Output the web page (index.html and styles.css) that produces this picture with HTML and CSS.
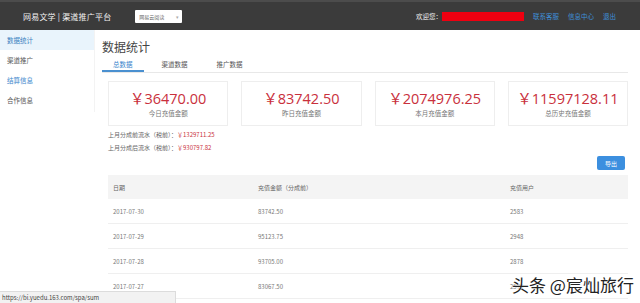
FILE: index.html
```html
<!DOCTYPE html>
<html lang="zh-CN">
  <head>
    <meta charset="UTF-8" />
    <meta name="viewport" content="width=device-width, initial-scale=1.0" />
    <title>网易文学 | 渠道推广平台</title>
    <link rel="stylesheet" href="styles.css">
  </head>
  <body>
    <!-- Top navigation bar -->
    <header class="topbar">
      <div class="brand">网易文学 | 渠道推广平台</div>
      <div class="select">网易云阅读<span class="caret">▾</span></div>
      <div class="user">
        <span class="welcome">欢迎您：</span>
        <span class="redact"></span>
        <a class="link" href="#">联系客服</a>
        <a class="link" href="#">信息中心</a>
        <a class="link" href="#">退出</a>
      </div>
    </header>

    <div class="layout">
      <!-- Side menu -->
      <nav class="sidebar">
        <div class="menu-item active">数据统计</div>
        <div class="menu-item">渠道推广</div>
        <div class="menu-item blue">结算信息</div>
        <div class="menu-item">合作信息</div>
      </nav>

      <main class="main">
        <h1 class="title">数据统计</h1>
        <div class="tabs">
          <div class="tab current">总数据</div>
          <div class="tab">渠道数据</div>
          <div class="tab">推广数据</div>
        </div>

        <div class="panel">
          <div class="cards">
            <div class="card">
              <div class="amount">￥36470.00</div>
              <div class="label">今日充值金额</div>
            </div>
            <div class="card">
              <div class="amount">￥83742.50</div>
              <div class="label">昨日充值金额</div>
            </div>
            <div class="card">
              <div class="amount">￥2074976.25</div>
              <div class="label">本月充值金额</div>
            </div>
            <div class="card">
              <div class="amount">￥11597128.11</div>
              <div class="label">总历史充值金额</div>
            </div>
          </div>

          <p class="note">上月分成前流水（税前）：<span class="red">￥1329711.25</span></p>
          <p class="note">上月分成后流水（税前）：<span class="red">￥930797.82</span></p>

          <div class="toolbar">
            <button type="button" class="export">导出</button>
          </div>

          <table class="table">
            <thead>
              <tr>
                <th class="col-date">日期</th>
                <th class="col-sum">充值金额（分成前）</th>
                <th>充值用户</th>
              </tr>
            </thead>
            <tbody>
              <tr><td>2017-07-30</td><td>83742.50</td><td>2583</td></tr>
              <tr><td>2017-07-29</td><td>95123.75</td><td>2948</td></tr>
              <tr><td>2017-07-28</td><td>93705.00</td><td>2878</td></tr>
              <tr><td>2017-07-27</td><td>83067.50</td><td>2579</td></tr>
            </tbody>
          </table>
        </div>
      </main>
    </div>

    <!-- Browser status bar and watermark overlays -->
    <div class="status">https://bi.yuedu.163.com/spa/sum</div>
    <div class="watermark">头条 @宸灿旅行</div>
  </body>
</html>
```

FILE: styles.css
```css
/* Page base */
body {
  margin: 0;
  font-family: "Noto Sans CJK SC", "Noto Sans", sans-serif;
  color: #333;
  background-color: #fff;
  overflow: hidden;
}

/* Top bar */
.topbar {
  height: 28px;
  border-top: 2px solid #4c4c4c;
  background-color: #3b3b3b;
  display: flex;
  align-items: center;
  padding: 0 24px 0 23px;
}

.brand {
  color: #f2f2f2;
  font-size: 8px;
  letter-spacing: 0.2px;
}

.select {
  margin-left: 24px;
  width: 40px;
  height: 13px;
  padding: 0 3px 0 4px;
  background-color: #fff;
  border-radius: 1px;
  color: #666;
  font-size: 5px;
  line-height: 13px;
  display: flex;
  justify-content: space-between;
}

.caret {
  color: #aaa;
  font-size: 5px;
}

.user {
  margin-left: auto;
  display: flex;
  align-items: center;
  font-size: 6.5px;
}

.welcome {
  color: #eee;
}

.redact {
  width: 82px;
  height: 9px;
  background-color: #ee0010;
  margin-right: 9px;
}

.link {
  color: #3f8fd8;
  text-decoration: none;
  margin-left: 9px;
}

.link:first-of-type {
  margin-left: 0;
}

/* Layout */
.layout {
  display: flex;
}

.sidebar {
  width: 95px;
  height: 82px;
  border-right: 1px solid #f3f3f3;
  box-sizing: border-box;
}

.menu-item {
  height: 20px;
  line-height: 20px;
  padding-left: 7px;
  font-size: 6.5px;
  color: #555;
}

.menu-item.active {
  background-color: #e9f4fc;
  color: #3a7fc0;
}

.menu-item.blue {
  color: #3a86cc;
}

.main {
  flex: 1;
  padding: 0 12px 0 7px;
}

.title {
  margin: 9px 0 0;
  font-size: 12px;
  font-weight: normal;
  line-height: 16px;
  color: #444;
}

/* Tabs */
.tabs {
  display: flex;
  gap: 7px;
  margin-top: 4px;
  border-bottom: 1px solid #e8e8e8;
}

.tab {
  padding: 0 11px;
  height: 13px;
  line-height: 11px;
  font-size: 6.5px;
  color: #555;
}

.tab.current {
  color: #3a86cc;
  border-bottom: 2px solid #4a90d0;
  height: 11px;
  margin-bottom: -1px;
}

/* Content panel */
.panel {
  padding-left: 6px;
}

.cards {
  display: grid;
  grid-template-columns: repeat(4, 1fr);
  gap: 13px;
  margin-top: 8px;
}

.card {
  height: 45px;
  border: 1px solid #eee;
  box-sizing: border-box;
  text-align: center;
}

.amount {
  margin-top: 8px;
  font-size: 14.5px;
  line-height: 17px;
  color: #c9303c;
  font-family: "Open Sans", "Noto Sans CJK SC", sans-serif;
}

.label {
  margin-top: 1px;
  font-size: 6.5px;
  color: #777;
}

.note {
  margin: 0;
  font-size: 6px;
  line-height: 13px;
  color: #666;
}

.cards + .note {
  margin-top: 2px;
}

.red {
  color: #c9303c;
}

.toolbar {
  display: flex;
  justify-content: flex-end;
  padding-right: 3px;
  margin-top: 2px;
}

.export {
  width: 28px;
  height: 14px;
  padding: 0;
  border: none;
  border-radius: 2px;
  background-color: #3c8fdf;
  color: #fff;
  font-family: inherit;
  font-size: 6px;
}

/* Data table */
.table {
  width: 100%;
  margin-top: 5px;
  border-collapse: collapse;
  font-size: 6px;
  color: #777;
}

.table th {
  height: 24px;
  background-color: #f4f4f4;
  font-weight: normal;
  text-align: left;
  padding: 0 0 0 5px;
  color: #666;
}

.table td {
  height: 24px;
  padding: 0 0 0 5px;
  border-bottom: 1px solid #efefef;
}

.col-date {
  width: 140px;
}

.col-sum {
  width: 247px;
}

/* Overlays */
.status {
  position: absolute;
  left: 0;
  bottom: 0;
  width: 173px;
  height: 11px;
  padding-left: 2px;
  background-color: #f2f2f2;
  border: 1px solid #dcdcdc;
  border-left: none;
  border-bottom: none;
  font-size: 6px;
  line-height: 11px;
  color: #444;
}

.watermark {
  position: absolute;
  left: 512px;
  top: 274px;
  font-size: 17px;
  line-height: 22px;
  color: #222;
  text-shadow: 0 0 2px #fff, 0 0 2px #fff;
}
```
